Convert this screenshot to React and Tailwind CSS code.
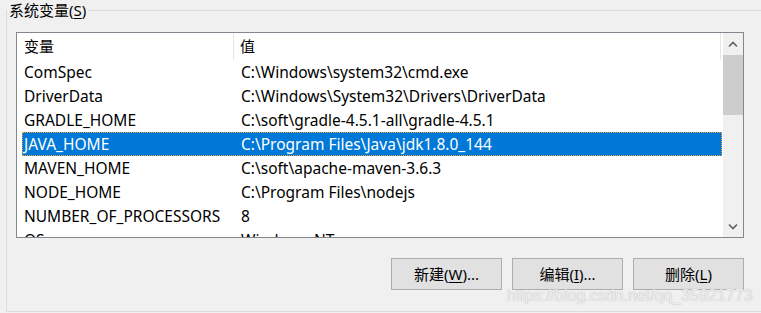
import React from 'react';

const font = 'font-["Noto_Sans","Noto_Sans_CJK_SC",sans-serif]';

const rows = [
  { name: 'ComSpec', value: 'C:\\Windows\\system32\\cmd.exe' },
  { name: 'DriverData', value: 'C:\\Windows\\System32\\Drivers\\DriverData' },
  { name: 'GRADLE_HOME', value: 'C:\\soft\\gradle-4.5.1-all\\gradle-4.5.1' },
  { name: 'JAVA_HOME', value: 'C:\\Program Files\\Java\\jdk1.8.0_144', selected: true },
  { name: 'MAVEN_HOME', value: 'C:\\soft\\apache-maven-3.6.3' },
  { name: 'NODE_HOME', value: 'C:\\Program Files\\nodejs' },
  { name: 'NUMBER_OF_PROCESSORS', value: '8' },
  { name: 'OS', value: 'Windows_NT' },
];

const Chevron = ({ down }) => (
  <svg width="10" height="7" viewBox="0 0 10 7">
    <polyline
      points={down ? '1,1.5 5,5.5 9,1.5' : '1,5.5 5,1.5 9,5.5'}
      fill="none"
      stroke="#606060"
      strokeWidth="1.6"
    />
  </svg>
);

const Button = ({ label, hotkey, suffix }) => (
  <button className="w-[111px] h-[32px] bg-[#e1e1e1] border border-[#adadad] text-[15px] text-black flex items-center justify-center">
    {label}(<span className="underline underline-offset-2">{hotkey}</span>){suffix}
  </button>
);

export default function App() {
  return (
    <div className={`relative w-[761px] h-[313px] bg-[#f0f0f0] overflow-hidden pl-[6px] ${font}`}>
      <fieldset className="w-[770px] h-[312px] border border-r-0 border-[#dcdcdc]">
        <legend className="px-[2px] text-[15px] leading-[21px] text-black">
          系统变量(<span className="underline underline-offset-2">S</span>)
        </legend>

        <div className="ml-[9px] mt-[11px] w-[728px]">
          {/* list view */}
          <div className="h-[206px] border border-[#828790] bg-white flex">
            <div className="flex-1 flex flex-col overflow-hidden">
              <div className="h-[27px] shrink-0 flex text-[15px] text-black">
                <div className="w-[217px] pl-[7px] flex items-center border-r border-[#e5e5e5]">变量</div>
                <div className="w-[487px] pl-[6px] flex items-center border-r border-[#e5e5e5]">值</div>
              </div>
              <div className="pl-[5px] pr-[1px]">
                {rows.map((r) => (
                  <div
                    key={r.name}
                    className={`h-[24px] grid grid-cols-[217px_1fr] items-center text-[15.5px] whitespace-nowrap ${
                      r.selected
                        ? 'bg-[#0078d7] text-white border border-dotted border-[#f0a030]'
                        : 'text-black border border-transparent'
                    }`}
                  >
                    <span className="pl-[1px]">{r.name}</span>
                    <span className="pl-[1px]">{r.value}</span>
                  </div>
                ))}
              </div>
            </div>

            {/* scrollbar */}
            <div className="w-[20px] bg-[#f0f0f0] flex flex-col">
              <div className="h-[22px] flex items-center justify-center">
                <Chevron />
              </div>
              <div className="h-[60px] bg-[#cdcdcd]" />
              <div className="flex-1" />
              <div className="h-[22px] flex items-center justify-center">
                <Chevron down />
              </div>
            </div>
          </div>

          <div className="mt-[20px] flex justify-end gap-[10px]">
            <Button label="新建" hotkey="W" suffix="..." />
            <Button label="编辑" hotkey="I" suffix="..." />
            <Button label="删除" hotkey="L" />
          </div>
        </div>
      </fieldset>

      <div className="absolute left-[507px] top-[284px] text-[16px] font-['Liberation_Sans',sans-serif] text-white/80 [text-shadow:0_0_1px_#9a9a9a]">
        https://blog.csdn.net/qq_35921773
      </div>
    </div>
  );
}
